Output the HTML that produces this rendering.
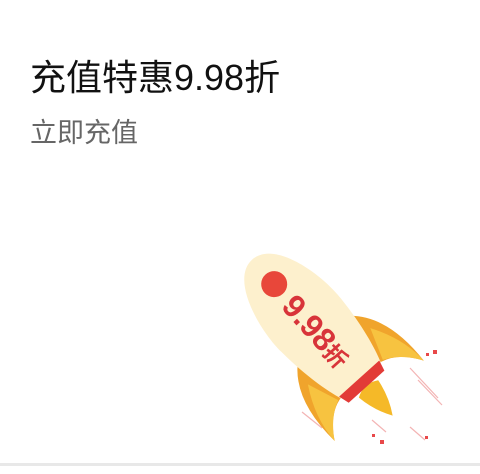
<!DOCTYPE html>
<html><head><meta charset="utf-8"><style>
html,body{margin:0;padding:0;background:#fff;}
body{width:480px;height:474px;position:relative;overflow:hidden;font-family:"Liberation Sans","Noto Sans CJK SC",sans-serif;}
.t{position:absolute;left:30px;top:56px;font-size:36px;color:#111;line-height:44px;white-space:nowrap;}
.s{position:absolute;left:30px;top:115px;font-size:27px;color:#666;line-height:36px;}
.line{position:absolute;left:0;top:463px;width:480px;height:3px;background:#e8e8e8;}
svg{position:absolute;left:0;top:0;}
</style></head><body>
<div class="t">充值特惠9.98折</div>
<div class="s">立即充值</div>
<svg width="480" height="474" viewBox="0 0 480 474">
  <g stroke="#f3b4b4" stroke-width="1.2">
    <line x1="410" y1="368" x2="438" y2="398"/>
    <line x1="418" y1="380" x2="442" y2="405"/>
    <line x1="302" y1="412" x2="322" y2="428"/>
    <line x1="372" y1="420" x2="386" y2="432"/>
    <line x1="410" y1="427" x2="425" y2="440"/>
  </g>
  <g fill="#e8484a">
    <rect x="433" y="350" width="4" height="4"/>
    <rect x="426" y="353" width="3" height="3"/>
    <rect x="372" y="434" width="3" height="3"/>
    <rect x="380" y="440" width="4" height="4"/>
    <rect x="425" y="436" width="3" height="3"/>
  </g>
  <g transform="translate(311,325) rotate(-42)">
    <path d="M-30,15 Q-64,40 -60,102 Q-46,78 -26,74 Z" fill="#f0a42c"/>
    <path d="M-42,42 Q-60,72 -60,102 Q-48,82 -30,74 Z" fill="#f7c340"/>
    <path d="M30,15 Q64,40 60,102 Q46,78 26,74 Z" fill="#f0a42c"/>
    <path d="M42,42 Q60,72 60,102 Q48,82 30,74 Z" fill="#f7c340"/>
    <path d="M-13,86 Q0,78 13,86 Q10,106 0,122 Q-10,106 -13,86 Z" fill="#f5b928"/>
    <path d="M0,-88 C30,-88 42,-30 40,0 C38,35 32,60 27,74 L-27,74 C-32,60 -38,35 -40,0 C-42,-30 -30,-88 0,-88 Z" fill="#fdf0cd"/>
    <path d="M-27,72 L27,72 L24,83 L-24,83 Z" fill="#e23b37"/>
    <circle cx="0" cy="-55" r="13" fill="#e8473a"/>
    <text transform="translate(-11,-34) rotate(90)" font-family="Liberation Sans,Noto Sans CJK SC,sans-serif" font-weight="bold" font-size="32" fill="#d8343a">9.98<tspan font-size="23">折</tspan></text>
  </g>
</svg>
<div class="line"></div>
</body></html>
